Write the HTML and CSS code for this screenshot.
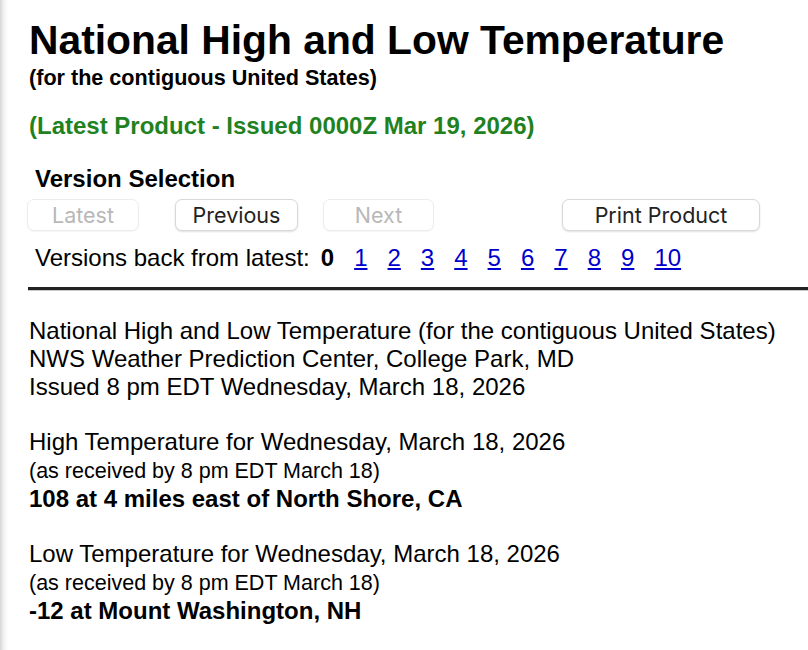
FILE: index.html
```html
<!DOCTYPE html>
<html>
<head>
<meta charset="utf-8">
<link rel="stylesheet" href="styles.css">
</head>
<body>
<div class="page">
  <h1 class="title">National High and Low Temperature</h1>
  <div class="subtitle">(for the contiguous United States)</div>
  <div class="latest">(Latest Product - Issued 0000Z Mar 19, 2026)</div>
  <div class="versions">
    <div class="vs-title">Version Selection</div>
    <div class="buttons">
      <button class="btn btn-latest" disabled>Latest</button>
      <button class="btn btn-prev">Previous</button>
      <button class="btn btn-next" disabled>Next</button>
      <button class="btn btn-print">Print Product</button>
    </div>
    <div class="back">
      <span class="back-label">Versions back from latest:</span>
      <span class="cur">0</span>
      <a href="#">1</a>
      <a href="#">2</a>
      <a href="#">3</a>
      <a href="#">4</a>
      <a href="#">5</a>
      <a href="#">6</a>
      <a href="#">7</a>
      <a href="#">8</a>
      <a href="#">9</a>
      <a href="#">10</a>
    </div>
  </div>
  <hr class="rule">
  <div class="product">
    <p class="block">National High and Low Temperature (for the contiguous United States)<br>NWS Weather Prediction Center, College Park, MD<br>Issued 8 pm EDT Wednesday, March 18, 2026</p>
    <p class="block">High Temperature for Wednesday, March 18, 2026<br><span class="small">(as received by 8 pm EDT March 18)</span><br><b>108 at 4 miles east of North Shore, CA</b></p>
    <p class="block">Low Temperature for Wednesday, March 18, 2026<br><span class="small">(as received by 8 pm EDT March 18)</span><br><b>-12 at Mount Washington, NH</b></p>
  </div>
</div>
</body>
</html>
```

FILE: styles.css
```css
html, body {
  margin: 0;
  padding: 0;
}
body {
  background: linear-gradient(to right, #d6d6d6 0px, #f4f4f4 4px, #ffffff 8px) no-repeat;
  background-size: 8px 100%;
  background-color: #fff;
  font-family: "Liberation Sans", Arial, sans-serif;
  color: #000;
  min-height: 650px;
}
.page {
  padding: 14px 0 0 29px;
}
.title {
  margin: 0;
  font-size: 40.8px;
  font-weight: bold;
  line-height: 52px;
}
.subtitle {
  font-size: 21.6px;
  font-weight: bold;
  line-height: 24px;
}
.latest {
  margin-top: 24px;
  font-size: 24px;
  font-weight: bold;
  color: #1f821f;
  line-height: 24px;
}
.versions {
  margin-top: 29px;
  padding-left: 6px;
}
.vs-title {
  font-size: 24px;
  font-weight: bold;
  line-height: 24px;
}
.buttons {
  display: flex;
  margin-top: 8px;
  margin-left: -8px;
}
.btn {
  height: 32px;
  box-sizing: border-box;
  font-family: Inter, "Noto Sans", sans-serif;
  font-size: 21.5px;
  color: #222;
  background: #fff;
  border: 1px solid #d8d8d8;
  border-radius: 7px;
  box-shadow: 0 1px 2px rgba(0,0,0,0.12);
  padding: 0;
  line-height: 30px;
}
.btn[disabled] {
  color: #b8b8b8;
  border-color: #ececec;
  box-shadow: 0 1px 1px rgba(0,0,0,0.04);
}
.btn-latest { width: 112px; }
.btn-prev { width: 123px; margin-left: 36px; }
.btn-next { width: 111px; margin-left: 25px; }
.btn-print { width: 198px; margin-left: 128px; }
.back {
  margin-top: 13px;
  font-size: 24px;
  line-height: 28px;
  display: flex;
  align-items: baseline;
}
.back-label {
  margin-right: 11px;
}
.cur {
  font-weight: bold;
  margin-right: 20px;
}
.back a {
  color: #0000cc;
  margin-right: 20px;
}
.rule {
  margin: 15px 0 0 -1px;
  border: 0;
  border-top: 3px solid #222;
  border-bottom: 1px solid #c8c8c8;
  height: 0;
}
.product {
  margin-top: 26px;
  font-size: 24px;
  line-height: 28px;
}
.block {
  margin: 0 0 27px 0;
}
.small {
  font-size: 21.5px;
}
```
